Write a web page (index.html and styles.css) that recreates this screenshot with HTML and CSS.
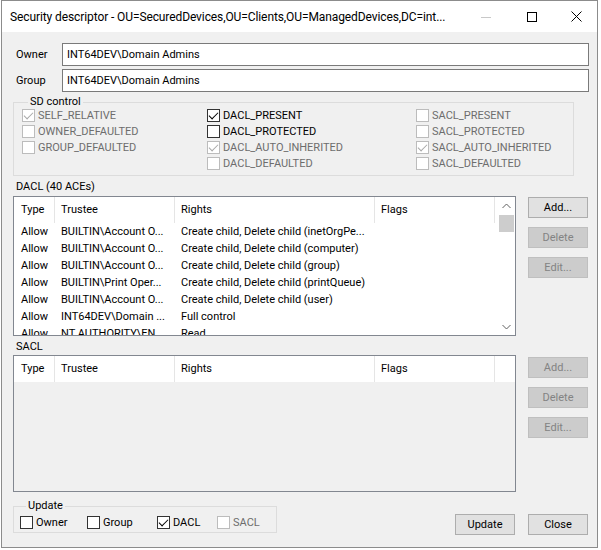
FILE: index.html
```html
<!DOCTYPE html>
<html lang="en">
<head>
    <meta charset="UTF-8">
    <title>Security descriptor</title>
    <link rel="stylesheet" href="styles.css">
</head>
<body>

    <div class="window">
        <div class="titlebar">
            <span class="title">Security descriptor - OU=SecuredDevices,OU=Clients,OU=ManagedDevices,DC=int...</span>
            <div class="caption-buttons">
                <span class="cap-btn">
                    <svg width="10" height="10" viewBox="0 0 10 10"><path d="M0 5.5H10" stroke="#c8c8c8" stroke-width="1"/></svg>
                </span>
                <span class="cap-btn">
                    <svg width="10" height="10" viewBox="0 0 10 10"><rect x="0.5" y="0.5" width="9" height="9" fill="none" stroke="#000" stroke-width="1"/></svg>
                </span>
                <span class="cap-btn close-btn">
                    <svg width="11" height="11" viewBox="0 0 11 11"><path d="M0.5 0.5L10.5 10.5M10.5 0.5L0.5 10.5" stroke="#000" stroke-width="1"/></svg>
                </span>
            </div>
        </div>

        <div class="client">
            <div class="field-row">
                <span class="field-label">Owner</span>
                <div class="textbox">INT64DEV\Domain Admins</div>
            </div>
            <div class="field-row second">
                <span class="field-label">Group</span>
                <div class="textbox">INT64DEV\Domain Admins</div>
            </div>

            <fieldset class="groupbox sd-control">
                <legend>SD control</legend>
                <div class="sd-grid">
                    <div class="sd-col">
                        <div class="check disabled checked"><span class="box"></span>SELF_RELATIVE</div>
                        <div class="check disabled"><span class="box"></span>OWNER_DEFAULTED</div>
                        <div class="check disabled"><span class="box"></span>GROUP_DEFAULTED</div>
                    </div>
                    <div class="sd-col">
                        <div class="check checked"><span class="box"></span>DACL_PRESENT</div>
                        <div class="check"><span class="box"></span>DACL_PROTECTED</div>
                        <div class="check disabled checked"><span class="box"></span>DACL_AUTO_INHERITED</div>
                        <div class="check disabled"><span class="box"></span>DACL_DEFAULTED</div>
                    </div>
                    <div class="sd-col">
                        <div class="check disabled"><span class="box"></span>SACL_PRESENT</div>
                        <div class="check disabled"><span class="box"></span>SACL_PROTECTED</div>
                        <div class="check disabled checked"><span class="box"></span>SACL_AUTO_INHERITED</div>
                        <div class="check disabled"><span class="box"></span>SACL_DEFAULTED</div>
                    </div>
                </div>
            </fieldset>

            <div class="section-label dacl-label">DACL (40 ACEs)</div>
            <div class="acl-row dacl-row">
                <div class="listview">
                    <div class="lv-main">
                        <div class="lv-header">
                            <span class="col-type">Type</span>
                            <span class="col-trustee">Trustee</span>
                            <span class="col-rights">Rights</span>
                            <span class="col-flags">Flags</span>
                        </div>
                        <div class="lv-row"><span class="col-type">Allow</span><span class="col-trustee">BUILTIN\Account O...</span><span class="col-rights">Create child, Delete child (inetOrgPe...</span><span class="col-flags"></span></div>
                        <div class="lv-row"><span class="col-type">Allow</span><span class="col-trustee">BUILTIN\Account O...</span><span class="col-rights">Create child, Delete child (computer)</span><span class="col-flags"></span></div>
                        <div class="lv-row"><span class="col-type">Allow</span><span class="col-trustee">BUILTIN\Account O...</span><span class="col-rights">Create child, Delete child (group)</span><span class="col-flags"></span></div>
                        <div class="lv-row"><span class="col-type">Allow</span><span class="col-trustee">BUILTIN\Print Oper...</span><span class="col-rights">Create child, Delete child (printQueue)</span><span class="col-flags"></span></div>
                        <div class="lv-row"><span class="col-type">Allow</span><span class="col-trustee">BUILTIN\Account O...</span><span class="col-rights">Create child, Delete child (user)</span><span class="col-flags"></span></div>
                        <div class="lv-row"><span class="col-type">Allow</span><span class="col-trustee">INT64DEV\Domain ...</span><span class="col-rights">Full control</span><span class="col-flags"></span></div>
                        <div class="lv-row"><span class="col-type">Allow</span><span class="col-trustee">NT AUTHORITY\EN...</span><span class="col-rights">Read</span><span class="col-flags"></span></div>
                    </div>
                    <div class="scrollbar">
                        <span class="sb-arrow">
                            <svg width="9" height="6" viewBox="0 0 9 6"><path d="M0.5 5L4.5 1L8.5 5" fill="none" stroke="#606060" stroke-width="1"/></svg>
                        </span>
                        <span class="sb-thumb"></span>
                        <span class="sb-track"></span>
                        <span class="sb-arrow">
                            <svg width="9" height="6" viewBox="0 0 9 6"><path d="M0.5 1L4.5 5L8.5 1" fill="none" stroke="#606060" stroke-width="1"/></svg>
                        </span>
                    </div>
                </div>
                <div class="side-buttons">
                    <button class="btn">Add...</button>
                    <button class="btn disabled">Delete</button>
                    <button class="btn disabled">Edit...</button>
                </div>
            </div>

            <div class="section-label sacl-label">SACL</div>
            <div class="acl-row sacl-row">
                <div class="listview empty">
                    <div class="lv-main">
                        <div class="lv-header">
                            <span class="col-type">Type</span>
                            <span class="col-trustee">Trustee</span>
                            <span class="col-rights">Rights</span>
                            <span class="col-flags">Flags</span>
                        </div>
                    </div>
                </div>
                <div class="side-buttons">
                    <button class="btn disabled">Add...</button>
                    <button class="btn disabled">Delete</button>
                    <button class="btn disabled">Edit...</button>
                </div>
            </div>

            <div class="bottom-row">
                <fieldset class="groupbox update-box">
                    <legend>Update</legend>
                    <div class="update-checks">
                        <div class="check"><span class="box"></span>Owner</div>
                        <div class="check"><span class="box"></span>Group</div>
                        <div class="check checked"><span class="box"></span>DACL</div>
                        <div class="check disabled"><span class="box"></span>SACL</div>
                    </div>
                </fieldset>
                <div class="dialog-buttons">
                    <button class="btn">Update</button>
                    <button class="btn">Close</button>
                </div>
            </div>
        </div>
    </div>

</body>
</html>
```

FILE: styles.css
```css
* {
    margin: 0;
    padding: 0;
    box-sizing: border-box;
}

body {
    background: #fff;
    font-family: Roboto, "Noto Sans", sans-serif;
    font-size: 11px;
    color: #000;
}

.window {
    margin-left: 1px;
    width: 597px;
    height: 548px;
    border: 1px solid #8c8c8c;
    background: #f0f0f0;
    display: flex;
    flex-direction: column;
}

/* title bar */

.titlebar {
    height: 31px;
    background: #fff;
    display: flex;
    align-items: center;
}

.title {
    flex: 1;
    padding-left: 8px;
    font-size: 12px;
    letter-spacing: -0.1px;
    white-space: nowrap;
    overflow: hidden;
}

.caption-buttons {
    display: flex;
}

.cap-btn {
    width: 46px;
    height: 31px;
    display: flex;
    align-items: center;
    justify-content: center;
}

.close-btn {
    width: 42px;
}

/* client area */

.client {
    padding: 11px 8px 0 11px;
    display: flex;
    flex-direction: column;
}

.field-row {
    display: flex;
    align-items: center;
    height: 23px;
}

.field-row.second {
    margin-top: 3px;
}

.field-label {
    width: 49px;
    padding-left: 3px;
}

.textbox {
    flex: 1;
    height: 23px;
    line-height: 21px;
    border: 1px solid #7a7a7a;
    background: #fff;
    padding-left: 4px;
}

/* group boxes */

.groupbox {
    border: 1px solid #dcdcdc;
    min-inline-size: 0;
}

.groupbox legend {
    margin-left: 6px;
    padding: 0 2px;
    line-height: 12px;
}

.sd-control {
    width: 561px;
    margin-top: 4px;
    padding: 0 0 4px 8px;
}

.sd-grid {
    display: grid;
    grid-template-columns: 185px 209px 1fr;
    margin-top: -1px;
}

.check {
    display: flex;
    align-items: center;
    height: 16px;
    gap: 3px;
    white-space: nowrap;
}

.check .box {
    width: 13px;
    height: 13px;
    border: 1px solid #333;
    background: #fff;
    display: flex;
    align-items: center;
    justify-content: center;
}

.check.checked .box::after {
    content: "";
    width: 8px;
    height: 4px;
    border-left: 1px solid #000;
    border-bottom: 1px solid #000;
    transform: translateY(-1px) rotate(-45deg);
}

.check.disabled {
    color: #6d6d6d;
}

.check.disabled .box {
    border-color: #bcbcbc;
}

.check.disabled.checked .box::after {
    border-color: #a8a8a8;
}

/* ACL lists */

.section-label {
    line-height: 15px;
    padding-left: 3px;
    margin-top: 3px;
}

.acl-row {
    display: flex;
    gap: 12px;
}

.dacl-row {
    margin-top: 2px;
}

.sacl-row {
    margin-top: 1px;
}

.listview {
    width: 503px;
    height: 140px;
    border: 1px solid #828790;
    background: #fff;
    display: flex;
    overflow: hidden;
}

.sacl-row .listview {
    height: 137px;
}

.listview.empty {
    background: #f0f0f0;
}

.lv-main {
    flex: 1;
    overflow: hidden;
}

.listview.empty .lv-main {
    flex: none;
    width: 100%;
}

.lv-header {
    display: flex;
    height: 26px;
    background: #fff;
}

.lv-header span {
    line-height: 25px;
    border-right: 1px solid #e5e5e5;
}

.lv-row {
    display: flex;
    height: 17px;
    line-height: 17px;
}

.lv-header span, .lv-row span {
    padding-left: 6px;
    white-space: nowrap;
    overflow: hidden;
    flex: none;
}

.col-type {
    width: 41px;
    padding-left: 7px !important;
}

.col-trustee {
    width: 120px;
}

.col-rights {
    width: 200px;
}

.col-flags {
    width: 120px;
}

.scrollbar {
    width: 17px;
    display: flex;
    flex-direction: column;
    background: #fff;
}

.sb-arrow {
    height: 17px;
    display: flex;
    align-items: center;
    justify-content: center;
}

.sb-thumb {
    height: 17px;
    margin: 1px 1px 0 1px;
    background: #cdcdcd;
}

.sb-track {
    flex: 1;
}

/* buttons */

.side-buttons {
    display: flex;
    flex-direction: column;
    gap: 9px;
    padding-top: 1px;
}

.sacl-row .side-buttons {
    padding-top: 2px;
}

.btn {
    width: 60px;
    height: 21px;
    border: 1px solid #adadad;
    background: #e1e1e1;
    font-family: inherit;
    font-size: 11px;
    color: #000;
}

.btn.disabled {
    background: #cccccc;
    border-color: #bfbfbf;
    color: #838383;
}

/* bottom */

.bottom-row {
    display: flex;
    justify-content: space-between;
    align-items: flex-start;
}

.update-box {
    width: 264px;
    margin-top: 8px;
    padding: 2px 0 2px 6px;
}

.update-checks {
    display: flex;
}

.update-checks .check:nth-child(1) {
    width: 67px;
}

.update-checks .check:nth-child(2) {
    width: 70px;
}

.update-checks .check:nth-child(3) {
    width: 60px;
}

.dialog-buttons {
    display: flex;
    gap: 13px;
    margin-top: 22px;
    margin-right: 1px;
}
```
